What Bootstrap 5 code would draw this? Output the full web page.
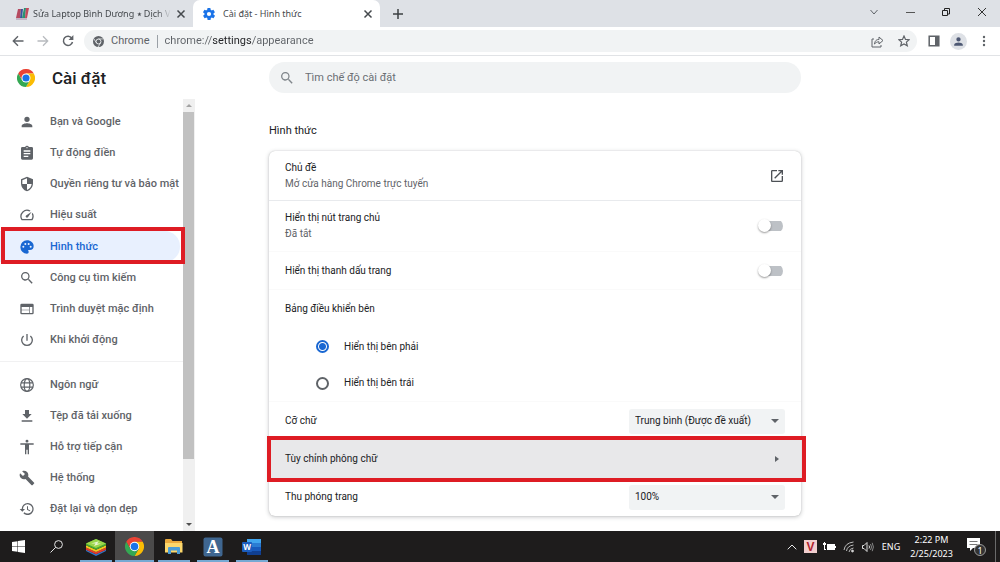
<!DOCTYPE html>
<html lang="vi">
<head>
<meta charset="utf-8">
<meta name="viewport" content="width=device-width, initial-scale=1">
<title>Cài đặt - Hình thức</title>
<link href="https://cdn.jsdelivr.net/npm/bootstrap@5.3.0/dist/css/bootstrap.min.css" rel="stylesheet">
<style>
:root{--ink:#202124;--muted-ink:#5f6368;--accent:#1967d2;--field:#f1f3f4;--alert:#de1c24}
body{font:10px/16px Roboto,"Noto Sans",sans-serif;color:var(--ink);background:#fff}
button,input,select{font:inherit;color:inherit}
.plain-btn{border:0;background:none;padding:0;display:inline-flex;align-items:center;justify-content:center;flex:none}
svg{display:block;flex:none}
.ico{width:16px;height:16px;fill:currentColor}
.ui-font{font-family:"Noto Sans",sans-serif}

/* browser frame */
.tab-strip{height:27px;background:#dee1e6;color:#45494d}
.tab-item{height:27px;width:187px;font-size:9px;padding:0 6px 0 10px}
.tab-item.first-tab{width:193px;padding-left:16px}
.tab-item.current{background:#fff;border-radius:7px 7px 0 0}
.tab-item a{color:inherit;white-space:nowrap}
.fade-end{-webkit-mask-image:linear-gradient(90deg,#000 90%,transparent)}
.win-btn{width:36px;height:24px}
.new-tab{height:27px}
.tool-bar{height:29px;border-bottom:1px solid #e1e3e6;color:var(--muted-ink);padding:0 4px 0 5px}
.tool-btn{width:25px;height:24px}
.omnibox{height:22px;border-radius:11px;background:var(--field);font-size:11px;padding:0 1px 0 9px;gap:7px}
.omnibox input{border:0;outline:0;padding:0;color:#5f6368;-webkit-text-fill-color:transparent;
  background:linear-gradient(90deg,#5f6368 48px,#202124 48px,#202124 87px,#5f6368 87px);-webkit-background-clip:text;background-clip:text}
.vr-line{width:1px;height:13px;background:#9aa0a6}
.avatar{width:17px;height:17px;border-radius:50%;background:#dee1e6;color:#4d5873}

/* side menu */
.side-col{width:195px;flex:none}
.side-head{height:43px;padding-left:17px;gap:17px}
.side-head h1{font-size:17px;line-height:24px;font-weight:500;margin:0}
.menu-list{padding-top:7px;width:183px}
.menu-group{display:grid;grid-auto-rows:1fr}
.menu-group.upper{height:250px}
.menu-group.lower{height:156px;margin-top:7px}
.menu-rule{border-top:1px solid #f1f1f2;margin-top:5px}
.menu-item{display:flex;align-items:center;gap:15px;padding-left:19px;margin-right:3px;font-size:11px;font-weight:500;color:var(--muted-ink);text-decoration:none;white-space:nowrap;position:relative}
.menu-item.chosen{background:#e8f0fe;color:var(--accent);border-radius:0 16px 16px 0}
.scroll-rail{width:12px;background:#f0f0f0;color:#505050}
.scroll-thumb{flex:347 1 0;background:#c1c1c1;margin:0 1px 0 0}
.scroll-rest{flex:59 1 0}
.scroll-end{height:13px}
.callout{position:absolute;border:4px solid var(--alert);pointer-events:none}
.menu-item .callout{inset:-4px -5px -2px 1px}
.opt-row .callout{inset:-4px -5px -4px -2px;z-index:2}

/* settings */
.content-col{padding:6px 199px 16px 74px}
.find-box{height:31px;border-radius:16px;background:var(--field);padding:0 10px;gap:10px;color:#80868b}
.find-box input{border:0;background:none;outline:0;padding:0;font-size:11px}
.find-box input::placeholder{color:#6b6f74;opacity:1}
.content-col h2{font-size:11px;line-height:16px;font-weight:400;margin:30px 0 12px}
.opt-panel{border-radius:6px;box-shadow:0 0 1px rgba(60,64,67,.3),0 1px 4px rgba(60,64,67,.3);background:#fff}
.opt-row{display:flex;align-items:center;justify-content:space-between;min-height:38px;padding:0 16px;position:relative}
.opt-row.tall{min-height:50px}
.opt-row.tall.faint{min-height:51px}
.opt-row.ruled{border-bottom:1px solid #e8eaed}
.opt-row.faint{border-bottom:1px solid #fafafa}
.opt-row.radio-row{padding-left:47px;justify-content:flex-start;gap:15px;min-height:37px}
.opt-row.hovered{background:#e8e8ea}
.sub-text{color:var(--muted-ink)}
.switch-box{appearance:none;width:25px;height:14px;margin:0 2px 0 0;position:relative;background:linear-gradient(#bdc1c6,#bdc1c6) 6px 2px/19px 10px no-repeat;border-radius:7px}
.switch-box::before{content:"";position:absolute;left:0;top:0;width:13px;height:13px;border-radius:50%;background:#fff;box-shadow:0 1px 2px rgba(0,0,0,.4)}
.radio-dot{appearance:none;width:13px;height:13px;margin:0;border:2px solid #5f6368;border-radius:50%}
.radio-dot:checked{border-color:var(--accent);background:radial-gradient(circle,var(--accent) 3px,transparent 4px)}
.pick-list{appearance:none;border:0;border-radius:3px;width:156px;height:25px;padding:0 6px;background:var(--field) url("data:image/svg+xml,%3Csvg xmlns='http://www.w3.org/2000/svg' viewBox='0 0 8 4'%3E%3Cpath d='M0 0h8L4 4z' fill='%235f6368'/%3E%3C/svg%3E") right 6px center/8px 4px no-repeat}

/* taskbar */
.task-bar{height:31px;background:#1e1c1c;color:#fff;font-size:9px;line-height:14px}
.task-btn{width:39px;height:31px;position:relative}
.task-btn.start{width:37px}
.task-btn.open::after{content:"";position:absolute;left:4px;right:3px;bottom:0;height:2px;background:#76a9d3}
.task-btn.front{background:#4b4a4a}
.task-btn.front::after{left:0;right:0}
.tray-btn{width:19px;height:31px}
.tray-lang{width:28px;height:31px}
.tray-clock{width:53px;height:31px}
.tray-note{width:29px;height:31px}
.desk-edge{width:5px;border-left:1px solid #6a6a6a;height:31px}
</style>
</head>
<body class="d-flex flex-column vh-100 overflow-hidden">
<svg width="0" height="0" class="position-absolute" aria-hidden="true">
  <symbol id="chrome" viewBox="0 0 48 48">
    <path fill="#ea4335" d="M3.200 12A24 24 0 0 1 44.800 12H24L13.600 30z"/>
    <path fill="#fbbc04" d="M44.800 12A24 24 0 0 1 24 48L34.400 30 24 12z"/>
    <path fill="#34a853" d="M3.200 12A24 24 0 0 0 24 48L34.400 30H13.600z"/>
    <circle cx="24" cy="24" r="12" fill="#fff"/><circle cx="24" cy="24" r="9.500" fill="#1a73e8"/>
  </symbol>
  <symbol id="lens" viewBox="0 0 24 24"><path d="M15.500 14h-.8l-.3-.3A6.500 6.500 0 1 0 13.700 14.400l.3.300v.800l5 5 1.500-1.500zm-6 0a4.500 4.500 0 1 1 0-9 4.500 4.500 0 0 1 0 9z"/></symbol>
  <symbol id="person" viewBox="0 0 24 24"><path d="M12 12a4 4 0 1 0 0-8 4 4 0 0 0 0 8zm0 2c-2.700 0-8 1.300-8 4v2h16v-2c0-2.700-5.300-4-8-4z"/></symbol>
  <symbol id="cross" viewBox="0 0 10 10"><path d="M1.500 1.500l7 7M8.500 1.500l-7 7" fill="none" stroke="currentColor" stroke-width="1.500"/></symbol>
</svg>

<header>
  <div class="tab-strip ui-font d-flex align-items-start">
    <div class="tab-item first-tab d-flex align-items-center gap-1">
      <svg width="13" height="12" viewBox="0 0 13 12"><path fill="#b64a60" d="M2 1h3l-1 9H0z"/><path fill="#39539a" d="M5 1h2L6 10H4z"/><path fill="#2b9271" d="M8 0h2L9 10H6z"/><path fill="#c3485b" d="M10 0h3l-2 10H9z"/><path d="M0 11h11" stroke="#a68aa5"/></svg>
      <a href="#" class="text-decoration-none flex-fill fade-end">Sửa Laptop Bình Dương ⭑ Dịch V</a>
      <button class="plain-btn" aria-label="Đóng thẻ"><svg width="12" height="10"><use href="#cross"/></svg></button>
    </div>
    <div class="tab-item current d-flex align-items-center gap-2">
      <svg width="12" height="12" viewBox="2 2 20 20" fill="#1a73e8"><path d="M19.400 13a7 7 0 0 0 0-2l2.100-1.600a.5.5 0 0 0 .1-.6l-2-3.500a.5.5 0 0 0-.6-.2l-2.500 1a7 7 0 0 0-1.700-1l-.4-2.600a.5.5 0 0 0-.5-.5h-4a.5.5 0 0 0-.5.500l-.4 2.600a7 7 0 0 0-1.700 1l-2.500-1a.5.5 0 0 0-.6.200l-2 3.500a.5.5 0 0 0 .1.600L4.600 11a7 7 0 0 0 0 2l-2.100 1.600a.5.5 0 0 0-.1.600l2 3.500a.5.5 0 0 0 .6.200l2.500-1a7 7 0 0 0 1.700 1l.4 2.600a.5.5 0 0 0 .5.500h4a.5.5 0 0 0 .5-.5l.4-2.600a7 7 0 0 0 1.700-1l2.500 1a.5.5 0 0 0 .6-.2l2-3.500a.5.5 0 0 0-.1-.6zM12 15.500a3.500 3.500 0 1 1 0-7 3.500 3.500 0 0 1 0 7z"/></svg>
      <a href="#" class="text-decoration-none flex-fill">Cài đặt - Hình thức</a>
      <button class="plain-btn" aria-label="Đóng thẻ"><svg width="12" height="10"><use href="#cross"/></svg></button>
    </div>
    <button class="plain-btn win-btn new-tab me-auto" aria-label="Thẻ mới"><svg width="12" height="12" viewBox="0 0 12 12"><path d="M6 1v10M1 6h10" stroke="#3c4043" stroke-width="1.500"/></svg></button>
    <button class="plain-btn win-btn" aria-label="Tìm thẻ"><svg width="10" height="10" viewBox="0 0 10 10" fill="none" stroke="#5f6368"><path d="M1.500 3l3.500 4 3.500-4"/></svg></button>
    <button class="plain-btn win-btn" aria-label="Thu nhỏ"><svg width="9" height="10" viewBox="0 0 9 10"><path d="M0 5.500h9" stroke="#555"/></svg></button>
    <button class="plain-btn win-btn" aria-label="Khôi phục"><svg width="10" height="10" viewBox="0 0 10 10" fill="none" stroke="#222"><path d="M1.500 3.500h5v5h-5zM3.500 3V1.500h5v5.500H7"/></svg></button>
    <button class="plain-btn win-btn" aria-label="Đóng"><svg width="10" height="10" viewBox="0 0 10 10"><path d="M1 1l8 8M9 1l-8 8" stroke="#333"/></svg></button>
  </div>
  <div class="tool-bar d-flex align-items-center">
    <button class="plain-btn tool-btn" aria-label="Quay lại"><svg width="12" height="12" viewBox="0 0 12 12" fill="none" stroke="currentColor" stroke-width="1.400"><path d="M11.500 6H1.500M6 1.300L1.300 6 6 10.700"/></svg></button>
    <button class="plain-btn tool-btn" aria-label="Tiến"><svg width="12" height="12" viewBox="0 0 12 12" fill="none" stroke="#b8bbbf" stroke-width="1.300"><path d="M.5 6h10M6 1.300L10.700 6 6 10.700"/></svg></button>
    <button class="plain-btn tool-btn" aria-label="Tải lại"><svg width="12" height="12" viewBox="0 0 12 12" fill="none" stroke="currentColor" stroke-width="1.500"><path d="M9.800 3.200A4.600 4.600 0 1 0 10.500 7"/><path fill="currentColor" stroke="none" d="M11.400 0v5H6.500z"/></svg></button>
    <div class="omnibox flex-fill d-flex align-items-center ms-1">
      <svg width="11" height="11" viewBox="0 0 12 12"><circle cx="6" cy="6" r="6" fill="#5f6368"/><circle cx="6" cy="6" r="2.700" fill="#5f6368" stroke="#f1f3f4"/><path d="M6 3.200h5.500M3.600 7.400L1 3M8.300 7.400L5.600 12" stroke="#f1f3f4" stroke-width=".8"/></svg>
      <label for="address">Chrome</label><span class="vr-line"></span>
      <input id="address" type="text" class="flex-fill" value="chrome://settings/appearance">
      <button class="plain-btn" aria-label="Chia sẻ"><svg width="13" height="13" viewBox="0 0 13 13" fill="none" stroke="currentColor"><path d="M3 4H1v8h9v-2M3.500 9c.5-3.500 2-4.500 4.500-4.500V2L12 5.500 8 9V6.800C6 6.800 5 7.500 3.500 9z"/></svg></button>
      <button class="plain-btn tool-btn" aria-label="Đánh dấu"><svg width="12" height="12" viewBox="0 0 12 12" fill="none" stroke="currentColor" stroke-width="1.200"><path d="M6 1l1.500 3.400 3.700.3-2.800 2.400.9 3.700L6 8.900l-3.300 1.900.9-3.700L.8 4.700l3.700-.3z"/></svg></button>
    </div>
    <button class="plain-btn tool-btn ms-1" aria-label="Bảng bên"><svg width="12" height="12" viewBox="0 0 12 12"><path fill="none" stroke="currentColor" stroke-width="1.500" d="M1.200 1.200h9.600v9.600H1.200z"/><path fill="currentColor" d="M7 1h4v10H7z"/></svg></button>
    <button class="plain-btn tool-btn" aria-label="Hồ sơ"><span class="avatar d-flex align-items-center justify-content-center"><svg width="13" height="13" fill="currentColor"><use href="#person"/></svg></span></button>
    <button class="plain-btn tool-btn" aria-label="Trình đơn"><svg width="4" height="12" viewBox="0 0 4 12" fill="currentColor"><circle cx="2" cy="2" r="1.200"/><circle cx="2" cy="6" r="1.200"/><circle cx="2" cy="10" r="1.200"/></svg></button>
  </div>
</header>

<div class="d-flex flex-fill overflow-hidden">
  <aside class="side-col d-flex flex-column">
    <div class="side-head d-flex align-items-center"><svg width="18" height="18"><use href="#chrome"/></svg><h1>Cài đặt</h1></div>
    <div class="d-flex flex-fill">
      <nav class="menu-list">
        <div class="menu-group upper">
          <a href="#" class="menu-item"><svg class="ico"><use href="#person"/></svg>Bạn và Google</a>
          <a href="#" class="menu-item"><svg class="ico" viewBox="0 0 24 24"><path d="M19 3h-4.200a3 3 0 0 0-5.600 0H5a2 2 0 0 0-2 2v15a2 2 0 0 0 2 2h14a2 2 0 0 0 2-2V5a2 2 0 0 0-2-2zm-7 0a1 1 0 1 1 0 2 1 1 0 0 1 0-2zm2 15H7v-2h7zm3-4H7v-2h10zm0-4H7V8h10z"/></svg>Tự động điền</a>
          <a href="#" class="menu-item"><svg class="ico" viewBox="0 0 24 24"><path d="M12 1L3 5v6c0 5.500 3.800 10.700 9 12 5.200-1.300 9-6.500 9-12V5zm0 11h7c-.5 4.100-3.300 7.800-7 8.900V12H5V6.300l7-3.100z"/></svg>Quyền riêng tư và bảo mật</a>
          <a href="#" class="menu-item"><svg class="ico" viewBox="0 0 24 24"><path d="M20.400 8.600l-1.200 1.800a8 8 0 0 1-.3 7.600H5.100A8 8 0 0 1 15.600 6.800L17.400 5.600A10 10 0 0 0 3.400 19a2 2 0 0 0 1.700 1h13.800a2 2 0 0 0 1.700-1 10 10 0 0 0-.2-10.400zM10.600 15.400a2 2 0 0 0 2.800 0L19 7l-8.400 5.600a2 2 0 0 0 0 2.800z"/></svg>Hiệu suất</a>
          <a href="#" class="menu-item chosen" aria-current="page"><svg class="ico" viewBox="0 0 24 24"><path d="M12 2a10 10 0 1 0 0 20c1.400 0 2.500-1.100 2.500-2.500 0-.6-.2-1.200-.6-1.700-.4-.5-.1-1.300.6-1.300H16a6 6 0 0 0 6-6C22 5.800 17.500 2 12 2zM6.500 13a1.500 1.500 0 1 1 0-3 1.500 1.500 0 0 1 0 3zm3-4a1.500 1.500 0 1 1 0-3 1.500 1.500 0 0 1 0 3zm5 0a1.500 1.500 0 1 1 0-3 1.500 1.500 0 0 1 0 3zm3 4a1.500 1.500 0 1 1 0-3 1.500 1.500 0 0 1 0 3z"/></svg>Hình thức<span class="callout"></span></a>
          <a href="#" class="menu-item"><svg class="ico"><use href="#lens"/></svg>Công cụ tìm kiếm</a>
          <a href="#" class="menu-item"><svg class="ico" viewBox="0 0 24 24"><path d="M20 4H4a2 2 0 0 0-2 2v12a2 2 0 0 0 2 2h16a2 2 0 0 0 2-2V6a2 2 0 0 0-2-2zm-5 14H4v-4h11zm0-5H4V9h11zm5 5h-4V9h4z"/></svg>Trình duyệt mặc định</a>
          <a href="#" class="menu-item"><svg class="ico" viewBox="0 0 24 24"><path d="M13 3h-2v10h2zm4.800 2.200l-1.400 1.400A7 7 0 1 1 7.600 6.600L6.200 5.200a9 9 0 1 0 11.600 0z"/></svg>Khi khởi động</a>
        </div>
        <div class="menu-rule"></div>
        <div class="menu-group lower">
          <a href="#" class="menu-item"><svg class="ico" viewBox="0 0 24 24" ><g fill="none" stroke="currentColor" stroke-width="1.800"><circle cx="12" cy="12" r="9.500"/><ellipse cx="12" cy="12" rx="4.200" ry="9.500"/><path d="M3 8.800h18M3 15.200h18"/></g></svg>Ngôn ngữ</a>
          <a href="#" class="menu-item"><svg class="ico" viewBox="0 0 24 24"><path d="M19 9h-4V3H9v6H5l7 7zM4 18.500v2h16v-2z"/></svg>Tệp đã tải xuống</a>
          <a href="#" class="menu-item"><svg class="ico" viewBox="0 0 24 24"><path d="M12 1a2.200 2.200 0 1 1 0 4.400A2.200 2.200 0 0 1 12 1zm10 7.500h-7V23h-2v-7h-2v7H9V8.500H2v-2h20z"/></svg>Hỗ trợ tiếp cận</a>
          <a href="#" class="menu-item"><svg class="ico" viewBox="0 0 24 24"><path d="M22.700 19l-9.100-9.100c.9-2.300.4-5-1.500-6.900-2-2-5-2.400-7.400-1.300L9 6 6 9 1.600 4.700C.4 7.100.9 10.100 2.900 12.100c1.900 1.900 4.600 2.400 6.900 1.500l9.100 9.100c.4.4 1 .4 1.400 0l2.300-2.300c.5-.4.500-1.100.1-1.400z"/></svg>Hệ thống</a>
          <a href="#" class="menu-item"><svg class="ico" viewBox="0 0 24 24"><path d="M13 3a9 9 0 0 0-9 9H1l4 4 4-4H6a7 7 0 1 1 2.100 4.900l-1.500 1.500A9 9 0 1 0 13 3zm-1 5v5l4.200 2.500.8-1.200-3.500-2.100V8z"/></svg>Đặt lại và dọn dẹp</a>
        </div>
      </nav>
      <div class="scroll-rail d-flex flex-column" aria-hidden="true">
        <div class="scroll-end d-flex align-items-center justify-content-center"><svg width="6" height="3" viewBox="0 0 6 3"><path fill="#a3a3a3" d="M0 3h6L3 0z"/></svg></div>
        <div class="scroll-thumb"></div><div class="scroll-rest"></div>
        <div class="scroll-end d-flex align-items-center justify-content-center"><svg width="6" height="3" viewBox="0 0 6 3"><path fill="#505050" d="M0 0h6L3 3z"/></svg></div>
      </div>
    </div>
  </aside>

  <main class="content-col flex-fill">
    <div class="find-box d-flex align-items-center"><svg class="ico"><use href="#lens"/></svg><input type="search" class="flex-fill" aria-label="Tìm chế độ cài đặt" placeholder="Tìm chế độ cài đặt"></div>
    <h2>Hình thức</h2>
    <section class="opt-panel">
      <div class="opt-row tall ruled">
        <div><div>Chủ đề</div><div class="sub-text">Mở cửa hàng Chrome trực tuyến</div></div>
        <button class="plain-btn" aria-label="Mở chủ đề"><svg width="16" height="16" viewBox="0 0 24 24" fill="#4d5156"><path d="M19 19H5V5h7V3H5a2 2 0 0 0-2 2v14c0 1.100.9 2 2 2h14a2 2 0 0 0 2-2v-7h-2zM14 3v2h3.600l-9.800 9.800 1.400 1.400L19 6.400V10h2V3z"/></svg></button>
      </div>
      <div class="opt-row tall faint">
        <label for="home"><span class="d-block">Hiển thị nút trang chủ</span><span class="d-block sub-text">Đã tắt</span></label>
        <input type="checkbox" role="switch" class="switch-box" id="home">
      </div>
      <div class="opt-row faint"><label for="marks">Hiển thị thanh dấu trang</label><input type="checkbox" role="switch" class="switch-box" id="marks"></div>
      <div class="opt-row">Bảng điều khiển bên</div>
      <div class="opt-row radio-row"><input class="radio-dot" type="radio" name="side" id="right" checked><label for="right">Hiển thị bên phải</label></div>
      <div class="opt-row radio-row faint"><input class="radio-dot" type="radio" name="side" id="left"><label for="left">Hiển thị bên trái</label></div>
      <div class="opt-row"><label for="size">Cỡ chữ</label><select class="pick-list" id="size"><option>Trung bình (Được đề xuất)</option></select></div>
      <div class="opt-row hovered">Tùy chỉnh phông chữ<button class="plain-btn me-1" aria-label="Tùy chỉnh phông chữ"><svg width="8" height="8" viewBox="0 0 8 8"><path d="M2 1l4 3-4 3z" fill="#5f6368"/></svg></button><span class="callout"></span></div>
      <div class="opt-row"><label for="zoom">Thu phóng trang</label><select class="pick-list" id="zoom"><option>100%</option></select></div>
    </section>
  </main>
</div>

<footer class="task-bar ui-font d-flex align-items-center">
  <button class="plain-btn task-btn start" aria-label="Start"><svg width="13" height="13" viewBox="0 0 13 13" fill="#fff"><path d="M0 2l5.500-.8v5H0zM6 1.100L13 0v6.200H6zM0 6.700h5.500v5L0 11zM6 6.700h7V13l-7-1.100z"/></svg></button>
  <button class="plain-btn task-btn" aria-label="Search"><svg width="13" height="13" viewBox="0 0 13 13" fill="none" stroke="#e6e6e6"><circle cx="8.500" cy="4.500" r="3.900"/><path d="M5.700 7.300L.5 12.500"/></svg></button>
  <button class="plain-btn task-btn open" aria-label="BlueStacks"><svg width="20" height="18" viewBox="0 0 20 20" preserveAspectRatio="none"><path fill="#2d75c9" d="M0 13l10 5 10-5v1.500L10 20 0 14.500z"/><path fill="#e13b2e" d="M0 10.500l10 5 10-5V13l-10 5L0 13z"/><path fill="#f6c51e" d="M0 8l10 5 10-5v2.500l-10 5-10-5z"/><path fill="#47ab2f" d="M0 6l10-5 10 5v2l-10 5L0 8z"/><path fill="#9bd64a" d="M0 6l10-5 10 5-10 5z"/><path fill="#e9f6d2" d="M5 6l8-2.500L11 6l4 0-7 3 1.500-3z"/></svg></button>
  <button class="plain-btn task-btn open front" aria-label="Chrome"><svg width="19" height="19"><use href="#chrome"/></svg></button>
  <button class="plain-btn task-btn open" aria-label="File Explorer"><svg width="18" height="15" viewBox="0 0 18 15"><path fill="#e9a93c" d="M0 1q0-1 1-1h5l1.500 2H17v3H0z"/><path fill="#fcd76b" d="M0 4h17.500v9.500H0z"/><path fill="#4a9cd6" d="M3 15V9q0-1 1-1h10q1 0 1 1v6h-3v-3.500H6V15z"/></svg></button>
  <button class="plain-btn task-btn open" aria-label="A"><svg width="20" height="20" viewBox="0 0 20 20"><rect width="19" height="19" x=".5" y=".5" rx="2" fill="#3f6690"/><text x="10" y="16" text-anchor="middle" font-family="Liberation Serif,serif" font-weight="700" font-size="18" fill="#fff">A</text></svg></button>
  <button class="plain-btn task-btn open" aria-label="Word"><svg width="20" height="18" viewBox="0 0 20 18"><path fill="#41a5ee" d="M5 1h14v4.500H5z"/><path fill="#2b7cd3" d="M5 5h14v4H5z"/><path fill="#185abd" d="M5 9h14v4H5z"/><path fill="#103f91" d="M5 13h14v4H5z"/><rect y="4" width="10" height="10" rx="1" fill="#1b5dbe"/><text x="5" y="12" text-anchor="middle" font-family="Open Sans,sans-serif" font-weight="700" font-size="8" fill="#fff">W</text></svg></button>
  <button class="plain-btn tray-btn ms-auto" aria-label="Hidden icons"><svg width="10" height="6" viewBox="0 0 10 6" fill="none" stroke="#e8e8e8"><path d="M.7 5.300L5 1l4.300 4.300"/></svg></button>
  <button class="plain-btn tray-btn" aria-label="V"><svg width="13" height="13" viewBox="0 0 13 13"><rect width="13" height="13" fill="#f2cfcf"/><text x="6.500" y="11" text-anchor="middle" font-family="Liberation Sans,sans-serif" font-weight="700" font-size="12" fill="#b11f2e">V</text></svg></button>
  <button class="plain-btn tray-btn" aria-label="Battery"><svg width="13" height="10" viewBox="0 0 13 10" fill="#fff"><path d="M4 2h8v2h1v2h-1v2H4z"/><path d="M0 1h1V0h1v1h1v2H2v4h1v1H1V3H0z"/></svg></button>
  <button class="plain-btn tray-btn" aria-label="Wi-Fi"><svg width="12" height="12" viewBox="0 0 12 12" fill="none" stroke="#bbb"><path d="M1 9Q2 2 10.500 1M3.500 10Q4 5 10.500 4M6 11Q6.500 7.500 10.500 7"/><circle cx="9.500" cy="10" r="1" fill="#fff"/></svg></button>
  <button class="plain-btn tray-btn" aria-label="Volume"><svg width="12" height="12" viewBox="0 0 12 12" fill="none" stroke="#ddd"><path d="M.5 4.500H2L5 1.500v9L2 7.500H.5z"/><path d="M7 4.500q1 1.500 0 3"/><path stroke="#888" d="M8.500 3q2 3 0 6M10.200 1.800q2.400 4.200 0 8.400"/></svg></button>
  <button class="plain-btn tray-lang" aria-label="Language">ENG</button>
  <button class="plain-btn tray-clock flex-column" aria-label="Clock"><span>2:22 PM</span><span>2/25/2023</span></button>
  <button class="plain-btn tray-note ms-1" aria-label="Notifications"><svg width="20" height="20" viewBox="0 0 20 20"><path fill="#fff" d="M0 1h13v10H6l-3 3v-3H0z"/><path stroke="#777" d="M2.500 4.500h8M2.500 7.500h8"/><circle cx="13" cy="13" r="5.500" fill="#333" stroke="#999"/><text x="13" y="16.500" text-anchor="middle" font-size="9" fill="#fff">1</text></svg></button>
  <div class="desk-edge ms-1"></div>
</footer>
<script src="https://cdn.jsdelivr.net/npm/bootstrap@5.3.0/dist/js/bootstrap.bundle.min.js"></script>
</body>
</html>
